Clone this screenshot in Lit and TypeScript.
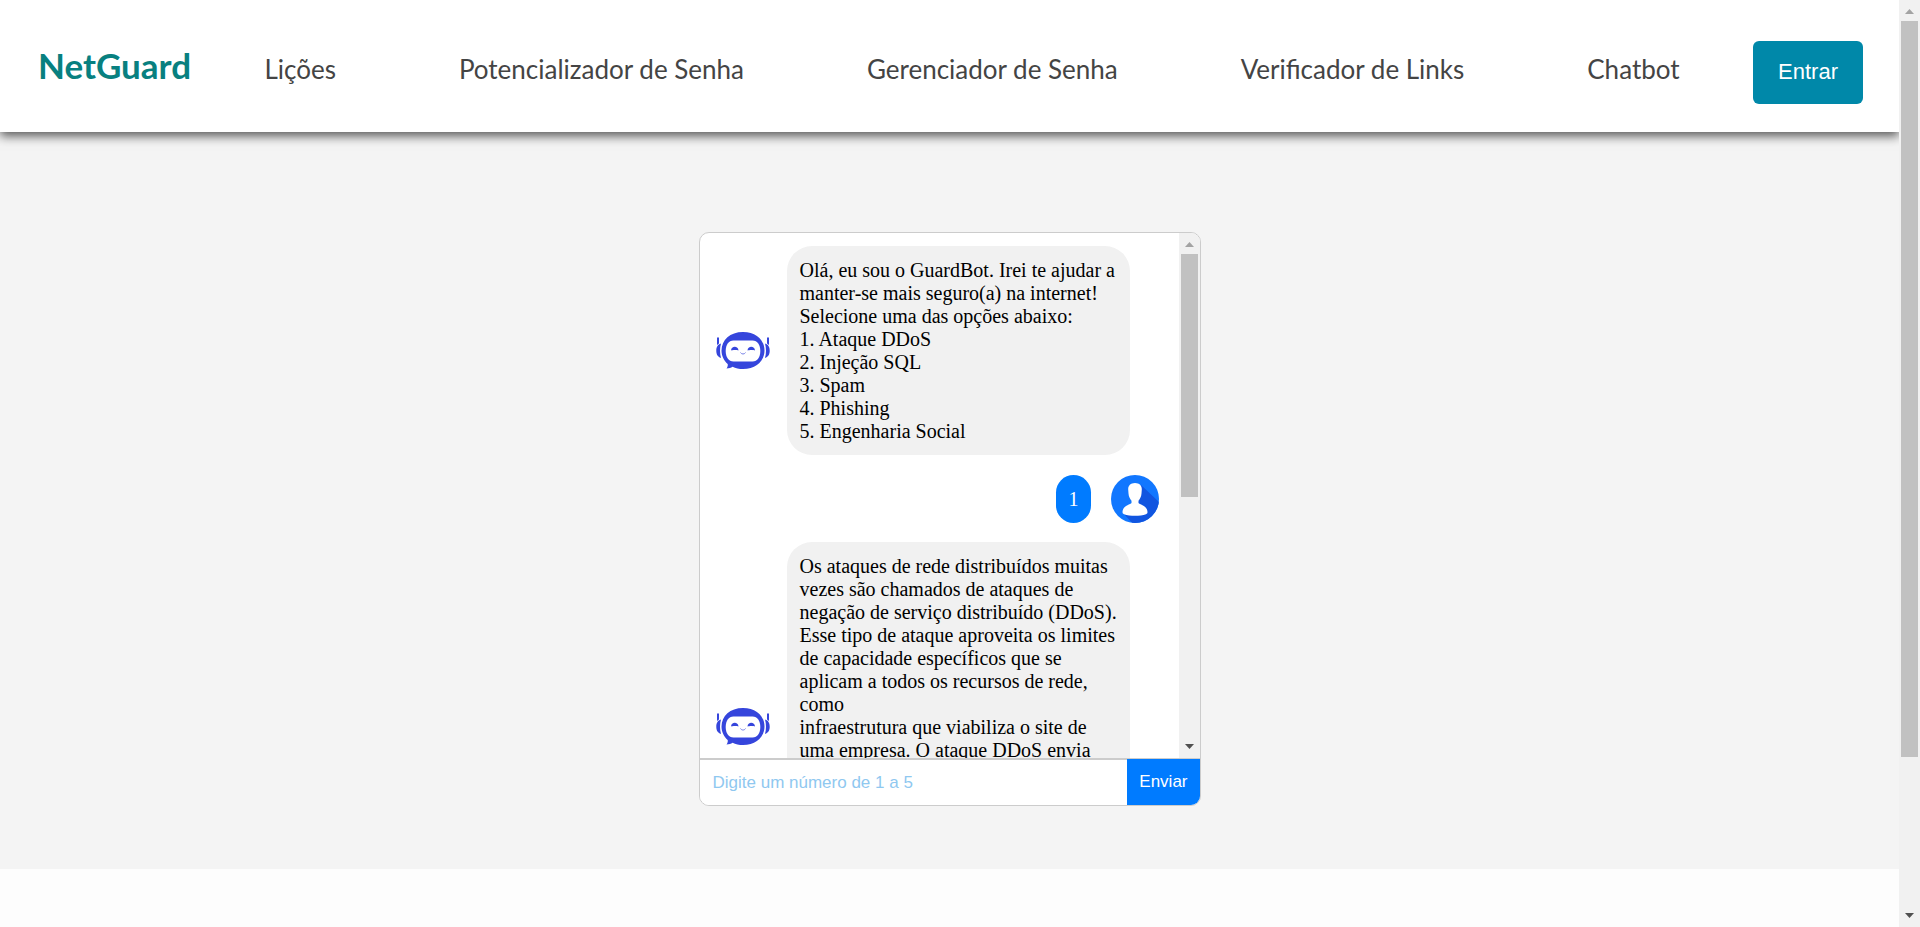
import { LitElement, html, css } from "lit";
import { customElement, property } from "lit/decorators.js";

interface Message {
  from: "bot" | "user";
  lines: string[];
}

const LINKS = [
  "Lições",
  "Potencializador de Senha",
  "Gerenciador de Senha",
  "Verificador de Links",
  "Chatbot",
];

const MESSAGES: Message[] = [
  {
    from: "bot",
    lines: [
      "Olá, eu sou o GuardBot. Irei te ajudar a manter-se mais seguro(a) na internet!",
      "Selecione uma das opções abaixo:",
      "1. Ataque DDoS",
      "2. Injeção SQL",
      "3. Spam",
      "4. Phishing",
      "5. Engenharia Social",
    ],
  },
  { from: "user", lines: ["1"] },
  {
    from: "bot",
    lines: [
      "Os ataques de rede distribuídos muitas vezes são chamados de ataques de negação de serviço distribuído (DDoS). Esse tipo de ataque aproveita os limites de capacidade específicos que se aplicam a todos os recursos de rede, como",
      "infraestrutura que viabiliza o site de uma empresa. O ataque DDoS envia múltiplas solicitações para o recurso invadido com o objetivo de exceder a capacidade que o site tem de lidar com diversas solicitações, impedindo seu funcionamento correto e deixando o serviço fora do ar.",
    ],
  },
];

@customElement("scroll-rail")
class ScrollRail extends LitElement {
  /** Share of the track that the thumb covers, in percent. */
  @property({ type: Number }) thumb = 50;

  static styles = css`
    :host {
      display: flex;
      flex-direction: column;
      width: 21px;
      background: #f1f1f1;
    }
    .arrow {
      display: block;
      width: 21px;
      height: 21px;
    }
    .up {
      fill: #a3a3a3;
    }
    .down {
      fill: #505050;
    }
    .track {
      flex: 1;
      padding: 0 2px;
    }
    .thumb {
      background: #c1c1c1;
    }
  `;

  render() {
    return html`
      <svg class="arrow up" viewBox="0 0 21 21"><path d="M6 14h9l-4.5-5z" /></svg>
      <div class="track"><div class="thumb" style="height:${this.thumb}%"></div></div>
      <svg class="arrow down" viewBox="0 0 21 21"><path d="M6 7h9l-4.5 5z" /></svg>
    `;
  }
}

const botIcon = html`
  <svg class="bot-icon" viewBox="0 0 54 38" aria-hidden="true">
    <g fill="#3545dc">
      <path d="M1 5.500h2v6l-2 1.500zM51 5.500h2V13l-2-1.500z" />
      <path d="M5 11.500C1.500 12.500.300 15.500.300 18.700s1.200 6.200 4.700 7.200c-1.300-4.500-1.300-9.900 0-14.400zM49 11.500c3.500 1 4.700 4 4.700 7.200s-1.200 6.200-4.700 7.200c1.300-4.500 1.300-9.900 0-14.400z" />
      <path d="M27 0C14 0 5.500 8 5.500 18.500c0 5.500 2.500 10.200 6.200 13.400.300 1.800-.2 3.200-1.200 4.600 2.500-.1 4.500-.8 6-1.800 3.100 1.500 6.700 2.300 10.500 2.300 13 0 21.500-8 21.500-18.500S40 0 27 0z" />
    </g>
    <path fill="#fff" d="M17.500 8.500h19c5 0 7.800 4.500 7.800 10.500s-2.800 10.500-7.800 10.500h-19c-5 0-7.800-4.500-7.800-10.500s2.800-10.500 7.800-10.500z" />
    <path fill="#3545dc" d="M15 18.500c.2-5 7.300-5 7.500 0-1.500-.7-6-.7-7.500 0zM31.500 18.500c.2-5 7.300-5 7.500 0-1.500-.7-6-.7-7.500 0z" />
    <path fill="none" stroke="#7680e6" d="M24.500 20.500c1 2 4 2 5 0" />
  </svg>
`;

const userIcon = html`
  <svg class="user-icon" viewBox="0 0 48 48" aria-hidden="true">
    <clipPath id="disc"><circle cx="24" cy="24" r="24" /></clipPath>
    <g clip-path="url(#disc)">
      <path fill="#1177ff" d="M0 0h48v48H0z" />
      <path fill="#1155e0" d="M30 10l20 19v22H24L13 39l12-8z" />
      <path fill="#fff" d="M24 8c-4.700 0-7 3-6.800 6.500l.300 4c.2 3 1.500 5.500 3 7.200V28c-1 1.800-8.500 2-9 9 0 1.300.5 1.800 1.500 2.200 6 2.200 16 2.200 22 0 1-.4 1.500-.9 1.500-2.200-.5-7-8-7.200-9-9v-2.300c1.500-1.700 2.800-4.200 3-7.200l.3-4C31 11 28.700 8 24 8z" />
    </g>
  </svg>
`;

@customElement("guard-chat")
class GuardChat extends LitElement {
  static styles = css`
    :host {
      display: block;
      box-sizing: border-box;
      width: 502px;
      max-width: 100%;
      border: 1px solid #ccc;
      border-radius: 10px;
      background: #fff;
      overflow: hidden;
    }
    .window {
      display: flex;
      height: 525px;
      border-bottom: 1px solid #ccc;
    }
    .messages {
      box-sizing: border-box;
      flex: 1;
      padding: 13px;
      display: flex;
      flex-direction: column;
      gap: 19px;
      overflow-y: auto;
      scrollbar-width: none;
      font: 20px/23px "Liberation Serif", "Times New Roman", serif;
      color: #000;
    }
    .message {
      display: flex;
      flex: none;
      align-items: center;
    }
    .message.user {
      justify-content: flex-end;
      gap: 20px;
      min-height: 49px;
      padding-right: 7px;
    }
    .message.bot {
      gap: 17px;
      padding-left: 3px;
    }
    .bubble {
      box-sizing: border-box;
      max-width: 343px;
      padding: 13px 12px 12px 13px;
      border-radius: 25px;
      background: #f1f1f1;
    }
    .user .bubble {
      background: #007bff;
      color: #fff;
    }
    .bot-icon {
      flex: none;
      width: 54px;
      height: 38px;
    }
    .user-icon {
      flex: none;
      width: 48px;
      height: 48px;
    }
    .entry {
      display: flex;
      height: 46px;
    }
    .field,
    .send {
      font: 17px/20px "Liberation Sans", Arial, sans-serif;
      border: 0;
      border-radius: 0;
    }
    .field {
      flex: 1;
      min-width: 0;
      padding: 0 13px;
      border-top: 1px solid #ccc;
      background: #fff;
      outline: 0;
    }
    .field::placeholder {
      color: #8fc8f0;
    }
    .send {
      padding: 0 12px;
      background: #007bff;
      color: #fff;
      cursor: pointer;
    }
  `;

  render() {
    return html`
      <div class="window">
        <div class="messages">
          ${MESSAGES.map(
            (m) => html`
              <div class="message ${m.from}">
                ${m.from === "bot" ? botIcon : null}
                <div class="bubble">${m.lines.map((line) => html`<div>${line}</div>`)}</div>
                ${m.from === "user" ? userIcon : null}
              </div>
            `
          )}
        </div>
        <scroll-rail thumb="50.300"></scroll-rail>
      </div>
      <form class="entry" @submit=${(e: Event) => e.preventDefault()}>
        <input class="field" type="text" aria-label="Número da opção" placeholder="Digite um número de 1 a 5" />
        <button class="send" type="submit">Enviar</button>
      </form>
    `;
  }
}

@customElement("app-root")
class AppRoot extends LitElement {
  static styles = css`
    :host {
      display: flex;
      height: 100vh;
      overflow: hidden;
      background: #fdfdfd;
    }
    .page {
      flex: 1;
      min-width: 0;
      overflow: hidden;
    }
    .header {
      position: relative;
      display: flex;
      align-items: baseline;
      box-sizing: border-box;
      padding: 41px 36px 28px 38px;
      background: #fff;
      box-shadow: 0 4px 10px rgba(0, 0, 0, 0.65);
      font-family: Lato, "Liberation Sans", Arial, sans-serif;
    }
    .logo {
      font-size: 35px;
      line-height: 44px;
      font-weight: 700;
      color: #088080;
      text-decoration: none;
    }
    .nav {
      flex: 1;
      display: flex;
      justify-content: space-around;
      padding: 0 12px;
    }
    .link {
      font-size: 26px;
      line-height: 36px;
      color: #444;
      text-decoration: none;
      white-space: nowrap;
    }
    .login {
      padding: 18px 25px 20px;
      border: 0;
      border-radius: 6px;
      background: #0088a9;
      color: #fff;
      font: 22px/25px "Liberation Sans", Arial, sans-serif;
      cursor: pointer;
    }
    .main {
      display: flex;
      justify-content: center;
      padding: 100px 0 63px;
      background: #f4f4f4;
    }
  `;

  render() {
    return html`
      <div class="page">
        <header class="header">
          <a class="logo" href="#">NetGuard</a>
          <nav class="nav">
            ${LINKS.map((text) => html`<a class="link" href="#">${text}</a>`)}
          </nav>
          <button class="login" type="button">Entrar</button>
        </header>
        <main class="main"><guard-chat></guard-chat></main>
      </div>
      <scroll-rail thumb="83.200"></scroll-rail>
    `;
  }
}
